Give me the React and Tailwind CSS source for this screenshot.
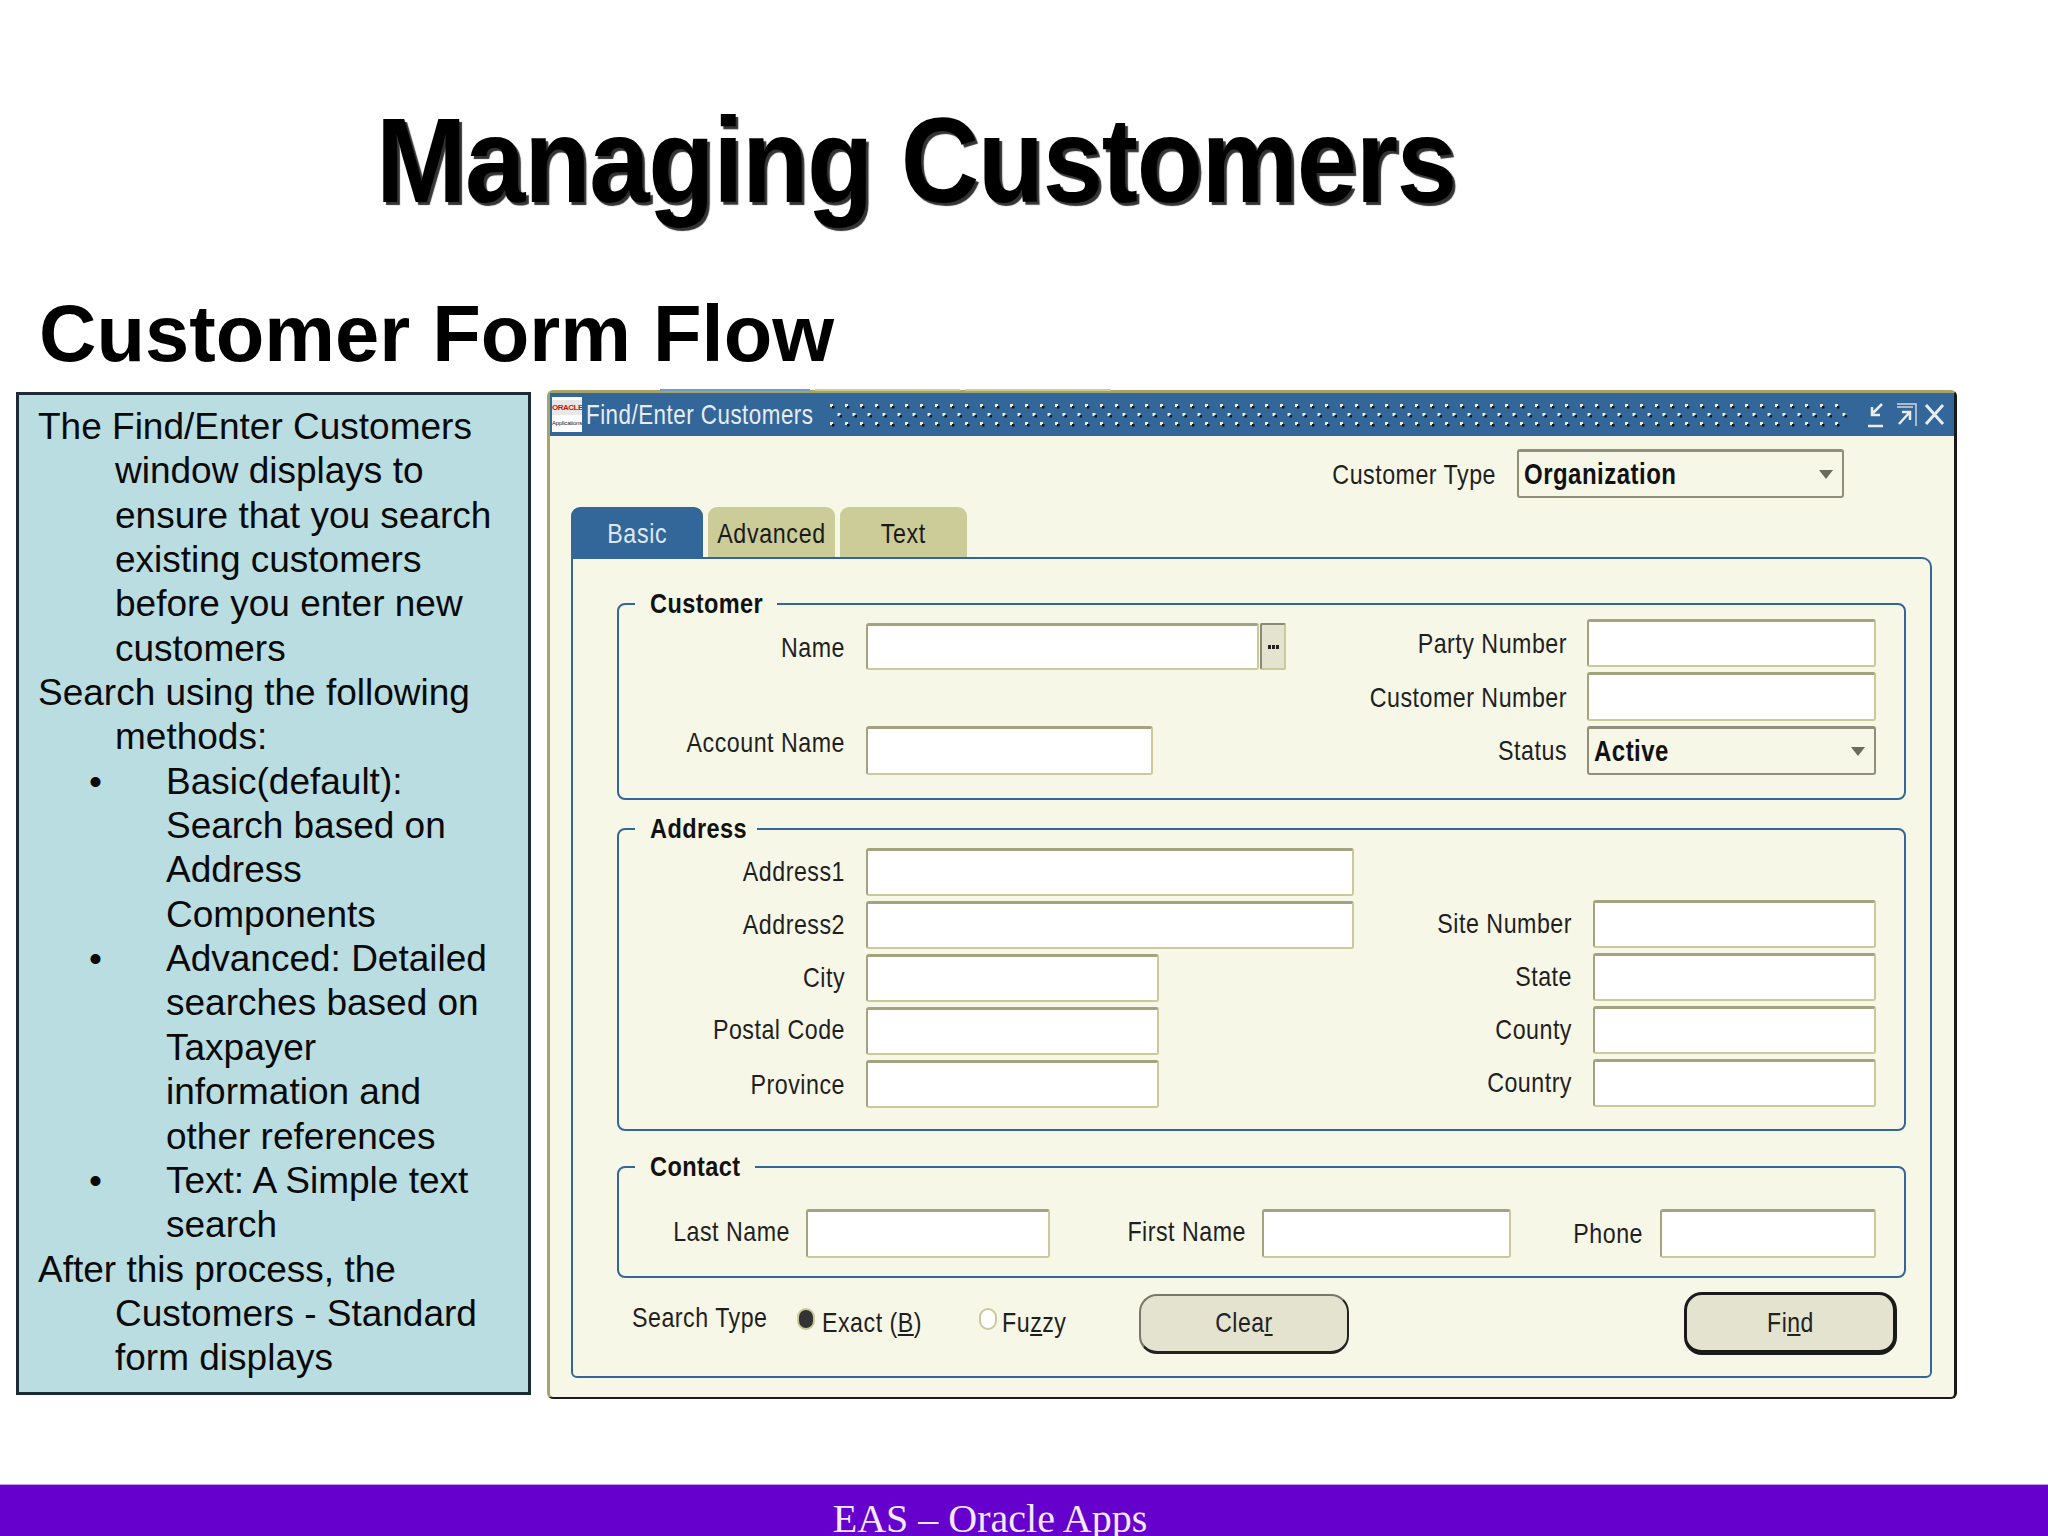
import React from "react";

const lblFont = "font-['Liberation_Sans',sans-serif]";

function Lbl({ children, w, cls = "" }) {
  return <div className={`${lblFont} ${w} text-right text-[28px] leading-none text-[#1f1f1f] tracking-[0.6px] whitespace-nowrap scale-x-[0.83] origin-right ${cls}`}>{children}</div>;
}
function Txt({ children, w, cls = "" }) {
  return <span className={`${lblFont} ${w} block text-[28px] leading-none text-[#1f1f1f] tracking-[0.6px] whitespace-nowrap scale-x-[0.83] origin-left ${cls}`}>{children}</span>;
}
function Input({ w, h = "h-[48px]" }) {
  return <div className={`${w} ${h} shrink-0 bg-white rounded-[3px] border-2 border-[#c9c99a] border-t-[3px] border-t-[#a3a380] border-l-[#a3a380]`} />;
}
function Select({ w, h, value }) {
  return (
    <div className={`${w} ${h} shrink-0 flex items-center justify-between pl-[5px] pr-[9px] bg-[#f7f7e7] rounded-[3px] border-2 border-t-[3px] border-[#8f8f7a]`}>
      <span className={`${lblFont} w-[200px] block text-[30px] font-bold text-[#111] tracking-[0.6px] leading-none scale-x-[0.8] origin-left`}>{value}</span>
      <span className="w-0 h-0 border-l-[7px] border-r-[7px] border-t-[9px] border-l-transparent border-r-transparent border-t-[#6b6b5a]" />
    </div>
  );
}
function Field({ label, lw, gap, inputW, h, lcls = "" }) {
  return (
    <div className={`flex items-center ${gap}`}>
      <Lbl w={lw} cls={lcls}>{label}</Lbl>
      <Input w={inputW} h={h} />
    </div>
  );
}
function Group({ title, bgw, h, children }) {
  return (
    <div className={`relative ml-[44px] w-[1289px] ${h} border-2 border-[#336699] rounded-[8px]`}>
      <div className={`absolute left-[16px] top-[-15px] ${bgw} h-[28px] bg-[#f7f7e7] flex items-center pl-[15px]`}>
        <span className={`${lblFont} text-[28px] font-bold text-[#111] tracking-[0.5px] leading-none whitespace-nowrap scale-x-[0.84] origin-left`}>{title}</span>
      </div>
      {children}
    </div>
  );
}
function Btn({ w, h, label, strong }) {
  return (
    <div className={`${w} ${h} rounded-[18px] bg-[#e3e3cf] flex items-center justify-center ${strong ? "border-[3px] border-[#1a1a1a] border-b-[5px] border-r-[4px]" : "border-2 border-[#c9c9a8] border-l-[#77776a] border-t-[#77776a] border-b-[3px] border-b-[#222] border-r-[#222]"}`}>
      <span className={`${lblFont} text-[28px] text-[#222] tracking-[0.6px] leading-none scale-x-[0.82]`}>{label}</span>
    </div>
  );
}
function Tab({ w, label, active, ml = "" }) {
  return (
    <div className={`${w} ${ml} h-[50px] pt-[4px] rounded-t-[9px] flex items-center justify-center ${active ? "bg-[#336699] text-[#dfe8f2]" : "bg-[#cccc99] text-[#1a1a1a]"}`}>
      <span className={`${lblFont} text-[28px] tracking-[0.8px] leading-none scale-x-[0.83]`}>{label}</span>
    </div>
  );
}

function Hang({ children }) {
  return <div className="pl-[77px] indent-[-77px]">{children}</div>;
}
function Bullet({ children }) {
  return (
    <div className="flex">
      <span className="w-[128px] shrink-0 pl-[51px]">•</span>
      <div className="w-[335px]">{children}</div>
    </div>
  );
}

export default function App() {
  return (
    <div className="w-[2048px] h-[1536px] bg-white overflow-hidden flex flex-col font-['Liberation_Sans',sans-serif]">
      <h1 className="h-[210px] pt-[92px] pl-[376px] text-[120px] leading-[136px] font-bold text-black tracking-[-1.5px] whitespace-nowrap scale-x-[0.905] origin-[376px_0] [text-shadow:3px_3px_1px_#333]">Managing Customers</h1>
      <h2 className="h-[180px] pt-[78px] pl-[39px] text-[79.5px] leading-[92px] font-bold text-black whitespace-nowrap">Customer Form Flow</h2>

      <div className="flex items-start pl-[16px]">
        <div className="w-[515px] h-[1003px] mt-[2px] border-[3px] border-[#1c2c34] bg-[#badde1] pl-[19px] pt-[10px] text-[37px] leading-[44.35px] text-[#0a0a0a]">
          <Hang>The Find/Enter Customers window displays to ensure that you search existing customers before you enter new customers</Hang>
          <Hang>Search using the following methods:</Hang>
          <Bullet>Basic(default): Search based on Address Components</Bullet>
          <Bullet>Advanced: Detailed searches based on Taxpayer information and other references</Bullet>
          <Bullet>Text: A Simple text search</Bullet>
          <Hang>After this process, the Customers - Standard form displays</Hang>
        </div>

        <div className="relative ml-[16px] w-[1410px] h-[1009px] bg-[#f7f7e7] rounded-[6px] border-t-[3px] border-l-[3px] border-t-[#a5a56b] border-l-[#a5a56b] border-r-[3px] border-r-[#1a1a1a] border-b-[2px] border-b-[#1a1a1a]">
          <div className="absolute left-[110px] top-[-4px] flex gap-[5px]">
            <div className="w-[150px] h-[2px] bg-[#6f9cc6]" />
            <div className="w-[145px] h-[2px] bg-[#cccc99]" />
            <div className="w-[146px] h-[2px] bg-[#cccc99]" />
          </div>

          {/* title bar */}
          <div className="h-[43px] bg-[#336699] flex items-center">
            <div className="w-[30px] h-[35px] ml-[2px] shrink-0 bg-white flex flex-col items-center overflow-hidden">
              <div className="w-full h-[15px] mt-[3px] bg-[#e8e8e8] text-[#d01010] text-[8px] tracking-[-0.5px] font-bold leading-[15px] text-center">ORACLE</div>
              <div className="w-full h-[2px] bg-white" />
              <div className="w-full text-[#222] text-[6px] tracking-[-0.2px] leading-[12px] text-center whitespace-nowrap">Applications</div>
            </div>
            <span className={`${lblFont} ml-[4px] w-[240px] shrink-0 block text-[28px] leading-none text-[#e6edf5] tracking-[0.6px] whitespace-nowrap scale-x-[0.8] origin-left`}>Find/Enter Customers</span>
            <svg className="ml-[2px] shrink-0" width="1020" height="30" viewBox="0 0 1020 30">
              <defs>
                <pattern id="dots" width="15" height="18" patternUnits="userSpaceOnUse">
                  <rect x="2" y="4" width="3" height="3" fill="#e8f0d8" />
                  <rect x="4" y="6" width="2.5" height="2.5" fill="#101820" />
                  <rect x="9.5" y="13" width="3" height="3" fill="#e8f0d8" />
                  <rect x="11.5" y="15" width="2.5" height="2.5" fill="#101820" />
                </pattern>
              </defs>
              <rect width="1020" height="30" fill="url(#dots)" />
            </svg>
            <svg className="ml-[18px] shrink-0" width="80" height="30" viewBox="0 0 80 30" fill="none" stroke="#e6edf5">
              <path d="M2 26H17M16 4L7 13M6 7V15H14" strokeWidth="2.5" />
              <path d="M31 4H50V26M31 7H47" strokeWidth="1.5" stroke="#cfd9e4" />
              <path d="M33 24L43 13M36 12H44V20" strokeWidth="2.5" />
              <path d="M60 5L77 24M77 5L60 24" strokeWidth="3" />
            </svg>
          </div>

          {/* customer type */}
          <div className="mt-[13px] flex items-center justify-end gap-[21px] pr-[110px]">
            <Lbl w="w-[200px]" cls="mt-[2px]">Customer Type</Lbl>
            <Select w="w-[327px]" h="h-[49px]" value="Organization" />
          </div>

          {/* tabs */}
          <div className="mt-[9px] ml-[21px] flex">
            <Tab w="w-[132px]" label="Basic" active />
            <Tab w="w-[127px]" ml="ml-[5px]" label="Advanced" />
            <Tab w="w-[127px]" ml="ml-[5px]" label="Text" />
          </div>

          {/* tab panel */}
          <div className="ml-[21px] w-[1361px] h-[821px] border-2 border-[#336699] rounded-b-[6px] rounded-tr-[10px] pt-[44px]">
            <Group title="Customer" bgw="w-[142px]" h="h-[197px]">
              <div className="flex justify-between pr-[28px]">
                <div className="pt-[18px]">
                  <div className="flex items-center">
                    <Lbl w="w-[226px]" cls="mt-[2px]">Name</Lbl>
                    <div className="ml-[21px]"><Input w="w-[393px]" h="h-[47px]" /></div>
                    <div className="ml-[1px] w-[26px] h-[47px] bg-[#e3e3cf] rounded-[2px] border-2 border-[#c9c99a] border-t-[#8a8a78] border-l-[#8a8a78] flex items-center justify-center gap-[1px]">
                      <span className="w-[3px] h-[4px] bg-[#222]" />
                      <span className="w-[3px] h-[4px] bg-[#222]" />
                      <span className="w-[3px] h-[4px] bg-[#222]" />
                    </div>
                  </div>
                  <div className="mt-[56px]">
                    <Field label="Account Name" lw="w-[226px]" gap="gap-[21px]" inputW="w-[287px]" h="h-[49px]" lcls="-mt-[16px]" />
                  </div>
                </div>
                <div className="pt-[14px] flex flex-col gap-[5px]">
                  <Field label="Party Number" lw="w-[260px]" gap="gap-[20px]" inputW="w-[289px]" h="h-[48px]" lcls="mt-[2px]" />
                  <Field label="Customer Number" lw="w-[260px]" gap="gap-[20px]" inputW="w-[289px]" h="h-[49px]" lcls="mt-[2px]" />
                  <div className="flex items-center gap-[20px]">
                    <Lbl w="w-[260px]">Status</Lbl>
                    <Select w="w-[289px]" h="h-[49px]" value="Active" />
                  </div>
                </div>
              </div>
            </Group>

            <div className="mt-[28px]" />
            <Group title="Address" bgw="w-[122px]" h="h-[303px]">
              <div className="flex justify-between pr-[28px]">
                <div className="pt-[18px] flex flex-col gap-[5px]">
                  <Field label="Address1" lw="w-[226px]" gap="gap-[21px]" inputW="w-[488px]" />
                  <Field label="Address2" lw="w-[226px]" gap="gap-[21px]" inputW="w-[488px]" />
                  <Field label="City" lw="w-[226px]" gap="gap-[21px]" inputW="w-[293px]" />
                  <Field label="Postal Code" lw="w-[226px]" gap="gap-[21px]" inputW="w-[293px]" lcls="-mt-[2px]" />
                  <Field label="Province" lw="w-[226px]" gap="gap-[21px]" inputW="w-[293px]" lcls="mt-[2px]" />
                </div>
                <div className="pt-[70px] flex flex-col gap-[5px]">
                  <Field label="Site Number" lw="w-[200px]" gap="gap-[21px]" inputW="w-[283px]" />
                  <Field label="State" lw="w-[200px]" gap="gap-[21px]" inputW="w-[283px]" />
                  <Field label="County" lw="w-[200px]" gap="gap-[21px]" inputW="w-[283px]" />
                  <Field label="Country" lw="w-[200px]" gap="gap-[21px]" inputW="w-[283px]" />
                </div>
              </div>
            </Group>

            <div className="mt-[35px]" />
            <Group title="Contact" bgw="w-[120px]" h="h-[112px]">
              <div className="pt-[41px] flex items-center">
                <Lbl w="w-[171px]" cls="-mt-[3px]">Last Name</Lbl>
                <div className="ml-[16px]"><Input w="w-[244px]" h="h-[49px]" /></div>
                <Lbl w="w-[196px]" cls="-mt-[3px]">First Name</Lbl>
                <div className="ml-[16px]"><Input w="w-[249px]" h="h-[49px]" /></div>
                <Lbl w="w-[132px]">Phone</Lbl>
                <div className="ml-[17px]"><Input w="w-[216px]" h="h-[49px]" /></div>
              </div>
            </Group>

            {/* bottom row */}
            <div className="mt-[14px] flex items-center h-[63px]">
              <Txt w="ml-[59px] w-[135px] -mt-[12px]">Search Type</Txt>
              <span className="ml-[30px] w-[18px] h-[22px] shrink-0 rounded-full border-2 border-[#c9c99a] bg-[#333] -mt-[10px]" />
              <Txt w="ml-[7px] w-[100px] -mt-[2px]">Exact (<u>B</u>)</Txt>
              <span className="ml-[57px] w-[18px] h-[22px] shrink-0 rounded-full border-2 border-[#c9c99a] bg-white -mt-[10px]" />
              <Txt w="ml-[5px] w-[65px] -mt-[2px]">Fu<u>z</u>zy</Txt>
              <div className="ml-[72px]"><Btn w="w-[210px]" h="h-[60px]" label={<>Clea<u>r</u></>} /></div>
              <div className="ml-[335px]"><Btn w="w-[213px]" h="h-[63px]" label={<>Fi<u>n</u>d</>} strong /></div>
            </div>
          </div>
        </div>
      </div>

      <div className="mt-auto h-[52px] bg-[#6600cc] border-t border-t-[#c9a0f0] overflow-hidden flex justify-center pr-[68px]">
        <span className="font-['Liberation_Serif',serif] text-[40px] leading-[52px] mt-[8px] text-[#f4e8ff] whitespace-nowrap">EAS – Oracle Apps</span>
      </div>
    </div>
  );
}
